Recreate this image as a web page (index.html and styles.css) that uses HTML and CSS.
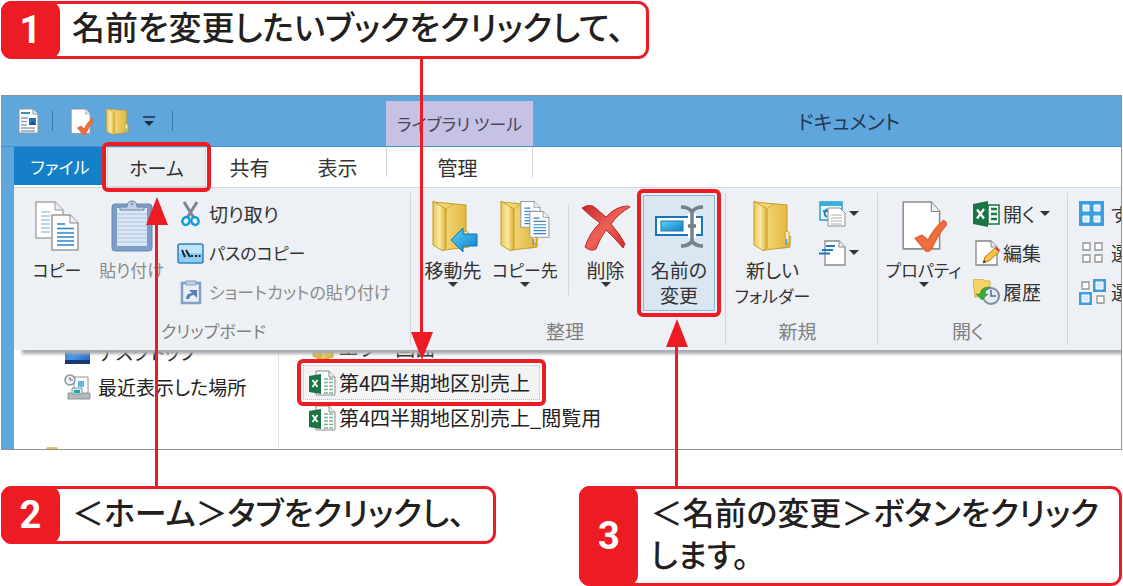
FILE: index.html
```html
<!DOCTYPE html>
<html lang="ja">
<head>
<meta charset="utf-8">
<meta name="viewport" content="width=device-width, initial-scale=1">
<title>ドキュメント</title>
<link rel="stylesheet" href="styles.css">
</head>
<body>
<svg class="defs" aria-hidden="true">
  <defs>
    <linearGradient id="gold" x1="0" x2="1"><stop offset="0" stop-color="#fbe694"/><stop offset="1" stop-color="#dfb53a"/></linearGradient>
    <linearGradient id="goldDark" x1="0" x2="1"><stop offset="0" stop-color="#e9c65a"/><stop offset=".5" stop-color="#f9e9a4"/><stop offset="1" stop-color="#dcae35"/></linearGradient>
    <linearGradient id="blue" x1="0" x2="1" y2="1"><stop offset="0" stop-color="#5fd0f7"/><stop offset="1" stop-color="#0b7fc9"/></linearGradient>
    <linearGradient id="red" x1="0" x2="1" y2="1"><stop offset="0" stop-color="#c9232a"/><stop offset=".5" stop-color="#ef6258"/><stop offset="1" stop-color="#c7222a"/></linearGradient>
    <linearGradient id="desk" x1="0" x2="1" y2="1"><stop offset="0" stop-color="#1d4fae"/><stop offset=".5" stop-color="#4f97e8"/><stop offset="1" stop-color="#1f5cbc"/></linearGradient>
    <symbol id="folder" viewBox="0 0 40 52">
      <path d="M28 50l9-3 2-11-6 2z" fill="#000" opacity=".12"/>
      <path d="M1 2L34 5V34l3 2v11l-25 3z" fill="url(#gold)" stroke="#c99a22"/>
      <path d="M1 1l13 8v39l-3 3L1 45z" fill="url(#goldDark)" stroke="#c99a22"/>
      <path d="M14 9l8-5" stroke="#d9ac37" fill="none"/>
      <path d="M32 31l4 1v10l-3 3z" fill="#fff3bf" stroke="#d5a62d"/>
      <path d="M33.500 39v6" stroke="#49a0df" stroke-width="1.500"/>
    </symbol>
    <symbol id="page" viewBox="0 0 29 38">
      <path d="M2 2h18l8 8v27H2z" fill="#fff" stroke="#9b9b9b" stroke-width="1.500"/>
      <path d="M20 2v8h8" fill="#f0f0f0" stroke="#8a8a8a"/>
      <path d="M7 11h8M7 15.500h17M7 20h17M7 24h17M7 28h17M7 32h17" stroke="#2b83cc" stroke-width="1.500"/>
    </symbol>
    <symbol id="check" viewBox="0 0 44 50">
      <path d="M2 2h27l8 9v36H2z" fill="#fff" stroke="#8d8d8d" stroke-width="1.500"/>
      <path d="M29 2v9h8" fill="#eee" stroke="#7f7f7f"/>
      <path d="M14 37l6-3 6 5Q32 27 41 20l3 3Q35 33 29 47l-4 3z" fill="#f0703d" stroke="#e4683a" stroke-width="2"/>
    </symbol>
    <symbol id="excel" viewBox="0 0 27 26">
      <path d="M15 4h11v19H15z" fill="#fff" stroke="#1a7443" stroke-width="1.500"/>
      <path d="M18 8h6M18 13h6M18 18h6" stroke="#1a7443" stroke-width="2.500"/>
      <path d="M0 3l15-3v26L0 23z" fill="#1a7443"/>
      <path d="M4 8.500l7 9M11 8l-7 9.500" stroke="#fff" stroke-width="2.200"/>
    </symbol>
    <symbol id="xlsx" viewBox="0 0 27 26">
      <path d="M7 1h13l6 6v18H7z" fill="#fff" stroke="#8b8b8b"/>
      <path d="M20 1v6h6" fill="#eee" stroke="#8b8b8b"/>
      <path d="M15 9h9M15 12.500h9M15 16h9M15 19.500h9M15 23h9" stroke="#74b58f" stroke-width="1.500" stroke-dasharray="4 1"/>
      <path d="M0 6l12-2v20L0 22z" fill="#1a7443"/>
      <path d="M3.500 10l5 7M8.500 10l-5 7" stroke="#fff" stroke-width="1.800"/>
    </symbol>
  </defs>
</svg>

<main class="guide">
  <section class="callout callout-first">
    <span class="callout-number">1</span>
    <p class="callout-text">名前を変更したいブックをクリックして、</p>
    <span class="arrow arrow-down"></span>
  </section>

  <section class="window">
    <header class="titlebar">
      <div class="quick">
        <svg class="quick-doc" viewBox="0 0 21 26" aria-hidden="true"><path d="M1 1h14l5 5v19H1z" fill="#fff" stroke="#8c97a5"/><path d="M15 1v5h5" fill="#e6edf4" stroke="#8c97a5"/><path d="M3 5h9" stroke="#3b9aa8" stroke-width="2"/><path d="M3 10h7M3 13.500h6M3 17h6M3 20h14M3 23h14" stroke="#8fa3bd" stroke-width="1.300"/><path d="M11 10h7v7h-7z" fill="#2478b8"/><path d="M11 17l4-4 3 4z" fill="#1c4f82"/></svg>
        <span class="quick-line"></span>
        <button class="quick-button quick-check" aria-label="プロパティ"><svg class="quick-wide" viewBox="0 0 44 50"><use href="#check"/></svg></button>
        <button class="quick-button" aria-label="新しいフォルダー"><svg class="quick-wide" viewBox="0 0 40 52" preserveAspectRatio="none"><use href="#folder"/></svg></button>
        <button class="quick-button quick-more" aria-label="カスタマイズ"><svg class="quick-menu" viewBox="0 0 14 11"><path d="M1 1h12" stroke="#1d2b3a" stroke-width="1.500"/><path d="M2 5h10l-5 5z" fill="#1d2b3a"/></svg></button>
        <span class="quick-line"></span>
      </div>
      <div class="context-label">ライブラリ ツール</div>
      <h1 class="title">ドキュメント</h1>
    </header>

    <nav class="tabs">
      <button class="tab tab-file">ファイル</button>
      <button class="tab tab-home marked">ホーム</button>
      <button class="tab">共有</button>
      <button class="tab">表示</button>
      <button class="tab tab-context">管理</button>
    </nav>

    <div class="ribbon">
      <section class="group group-clipboard">
        <div class="tools">
          <button class="big"><svg class="big-icon" viewBox="0 0 46 52"><path d="M2 2h19l8 8v28H2z" fill="#fff" stroke="#a8a8a8" stroke-width="1.500"/><path d="M21 2v8h8" fill="#eee" stroke="#999"/><path d="M7 12h9M7 16h9M7 20h9M7 24h9M7 28h9M7 32h9" stroke="#a5c9e6" stroke-width="1.500"/><use href="#page" x="16" y="13" width="29" height="38"/></svg><span class="small-kana">コピー</span></button>
          <button class="big big-paste" disabled><svg class="big-icon" viewBox="0 0 46 52"><rect x="3" y="4" width="40" height="47" rx="3" fill="#7d9cc6" stroke="#6988b4"/><path d="M8 8h30v38H8z" fill="#dbe7f4"/><path d="M8 14h30M8 18h30M8 22h30M8 26h30M8 30h30M8 34h30M8 38h30M8 42h30" stroke="#a9c2de"/><path d="M11 10V7h7q0-6 5-6t5 6h7v3z" fill="#c4d2e4" stroke="#6783a8"/><circle cx="23" cy="4" r="1.500" fill="#7d9cc6"/></svg><span class="small-kana">貼り付け</span></button>
          <div class="stack">
            <button class="small"><svg class="icon" viewBox="0 0 27 26"><path d="M7 1l10 16M20 1L10 17" stroke="#7b8793" stroke-width="3"/><ellipse cx="9" cy="20" rx="3.500" ry="4" fill="none" stroke="#139bd8" stroke-width="2.500" transform="rotate(25 9 20)"/><ellipse cx="18" cy="20" rx="3.500" ry="4" fill="none" stroke="#139bd8" stroke-width="2.500" transform="rotate(-25 18 20)"/></svg><span>切り取り</span></button>
            <button class="small"><svg class="icon" viewBox="0 0 27 26"><rect x="1" y="4" width="25" height="19" rx="2" fill="#8fcdf4" stroke="#3282c2" stroke-width="1.500"/><path d="M2 5h23v8H2z" fill="#bfe3fa"/><path d="M5 10l3 7M9 10l4 7" stroke="#17242f" stroke-width="2"/><path d="M14 16h2M18 16h2M21.500 16h2" stroke="#17242f" stroke-width="2"/></svg><span class="small-kana">パスのコピー</span></button>
            <button class="small" disabled><svg class="icon" viewBox="0 0 27 26"><path d="M5 4h18v20H5z" fill="#e7eef7" stroke="#829fc4" stroke-width="2.500"/><path d="M9 2h10v4H9z" fill="#c4d4e8" stroke="#829fc4"/><path d="M9 20q0-6 6-6l-3-3h8v8l-3-3q-4 0-5 4z" fill="#5f80ad"/></svg><span class="small-kana">ショートカットの貼り付け</span></button>
          </div>
        </div>
        <h2 class="group-name small-kana">クリップボード</h2>
      </section>

      <section class="group group-organize">
        <div class="tools">
          <button class="big"><svg class="big-icon big-icon-wide" viewBox="0 0 50 52"><use href="#folder" x="4" y="0" width="40" height="52"/><path d="M23 40l12-12v6h14v12H35v6z" fill="url(#blue)" stroke="#0b74b8"/></svg><span>移動先</span><i class="caret"></i></button>
          <button class="big"><svg class="big-icon big-icon-wide" viewBox="0 0 50 52"><use href="#folder" x="0" y="0" width="40" height="52"/><use href="#page" x="19" y="0" width="22" height="28"/><use href="#page" x="28" y="10" width="22" height="28"/></svg><span class="small-kana">コピー先</span><i class="caret"></i></button>
          <span class="rule"></span>
          <button class="big big-delete"><svg class="big-icon big-icon-wide" viewBox="0 0 50 52"><path d="M1 8q5-4 11-2 6 5 13 11Q35 6 47 6l2 1Q37 14 30 24q9 10 14 20l-2 4q-8-10-17-18-6 8-10 19-5 3-11-2Q9 32 19 23 9 16 1 8z" fill="url(#red)" stroke="#bd2a2c"/></svg><span>削除</span><i class="caret"></i></button>
          <button class="big big-rename marked"><svg class="big-icon big-icon-wide" viewBox="0 0 50 52"><rect x="2" y="17" width="46" height="18" fill="#fff" stroke="#1c74b9" stroke-width="2"/><rect x="7" y="21" width="22" height="10" fill="url(#blue)" stroke="#1679b8"/><path d="M34 14h8v24h-8z" fill="#fff"/><path d="M27 7q8 0 11 5 3-5 11-5M27 46q8 0 11-5 3 5 11 5M38 11v31M34 26h8" fill="none" stroke="#77818a" stroke-width="3.500"/></svg><span>名前の<br>変更</span></button>
        </div>
        <h2 class="group-name">整理</h2>
      </section>

      <section class="group group-new">
        <div class="tools">
          <button class="big big-folder"><svg class="big-icon" viewBox="0 0 40 52"><use href="#folder"/></svg><span>新しい<br><span class="small-kana">フォルダー</span></span></button>
          <div class="stack">
            <button class="small" aria-label="新しいアイテム"><svg class="icon" viewBox="0 0 27 26"><path d="M1 1h22v18H1z" fill="#eef9fd" stroke="#2b9cc9" stroke-width="1.500"/><path d="M1 1h22v4H1z" fill="#37b1dc"/><path d="M8 8q-5 5 0 8M4 10h6" stroke="#2782b5" stroke-width="2" fill="none"/><path d="M9 7h12l5 5v13H9z" fill="#fff" stroke="#8a8a8a"/><path d="M12 14h11M12 17h11M12 20h11M12 23h11" stroke="#aaa"/></svg><i class="caret"></i></button>
            <button class="small" aria-label="ショートカット"><svg class="icon" viewBox="0 0 27 26"><path d="M6 1h14l6 6v18H6z" fill="#fff" stroke="#8a8a8a" stroke-width="1.300"/><path d="M20 1v6h6" fill="#eee" stroke="#8a8a8a"/><path d="M7 6h9M3 10h11M0 13.500h11" stroke="#2477bd" stroke-width="1.800"/></svg><i class="caret"></i></button>
          </div>
        </div>
        <h2 class="group-name">新規</h2>
      </section>

      <section class="group group-open">
        <div class="tools">
          <button class="big big-property"><svg class="big-icon" viewBox="0 0 44 50"><use href="#check"/></svg><span class="small-kana">プロパティ</span><i class="caret"></i></button>
          <div class="stack">
            <button class="small"><svg class="icon" viewBox="0 0 27 26"><use href="#excel"/></svg><span>開く</span><i class="caret"></i></button>
            <button class="small"><svg class="icon" viewBox="0 0 27 26"><path d="M3 1h15l6 6v18H3z" fill="#fff" stroke="#858585" stroke-width="1.300"/><path d="M18 1v6h6" fill="#eee" stroke="#858585"/><path d="M10 23l2-6L22 8l4 4-10 9z" fill="#f5c243" stroke="#a97b22"/><path d="M22 8l2-1 3 3-1 2z" fill="#dc3c4b"/><path d="M10 23l1-3 2 2z" fill="#333"/></svg><span>編集</span></button>
            <button class="small"><svg class="icon" viewBox="0 0 27 26"><path d="M0 0h10l2 2h5v15l-15 1z" fill="#f7d468" stroke="#d5a93a"/><circle cx="18" cy="17" r="8" fill="#e4ecf2" stroke="#7a8e9e" stroke-width="2"/><path d="M18 11v6h5" fill="none" stroke="#4a6d8c" stroke-width="1.500"/><path d="M3 15l6 6 6-6h-3q0-5 5-7Q8 7 7 15z" fill="#3cab3a" stroke="#2c8a2e" stroke-width=".5"/></svg><span>履歴</span></button>
          </div>
        </div>
        <h2 class="group-name">開く</h2>
      </section>

      <section class="group group-select">
        <div class="stack">
          <button class="small"><svg class="icon" viewBox="0 0 27 26"><path d="M0 0h25v25H0z" fill="#3f9ddf"/><path d="M4 4h6v6H4zM15 4h6v6h-6zM4 15h6v6H4zM15 15h6v6h-6z" fill="#d5ebfb" stroke="#fff"/></svg><span>す</span></button>
          <button class="small"><svg class="icon" viewBox="0 0 27 26"><path d="M4 3h7v7H4zM16 3h7v7h-7zM4 15h7v7H4zM16 15h7v7h-7z" fill="#fff" stroke="#929292" stroke-width="1.300"/></svg><span>選</span></button>
          <button class="small"><svg class="icon" viewBox="0 0 27 26"><path d="M14 0h13v13H14zM0 13h13v13H0z" fill="#3f9ddf"/><path d="M17 3h7v7h-7zM3 16h7v7H3z" fill="#d5ebfb" stroke="#fff"/><path d="M3 3h7v7H3zM18 17h7v7h-7z" fill="#fff" stroke="#929292" stroke-width="1.300"/></svg><span>選</span></button>
        </div>
      </section>
    </div>

    <div class="content">
      <ul class="places">
        <li class="place"><svg class="icon" viewBox="0 0 27 26"><path d="M1 1h25v24H1z" fill="url(#desk)"/><path d="M1 21h25v4H1z" fill="#173a72"/></svg><a href="#desktop">デスクトップ</a></li>
        <li class="place"><svg class="icon" viewBox="0 0 27 26"><path d="M10 3h14v18H10z" fill="#fff" stroke="#929292"/><path d="M14 7h6v6h-6z" fill="#5bb9df"/><path d="M4 19h22v6H4z" fill="#b4b9bd" stroke="#909497"/><path d="M8 14h10v6H8z" fill="#d3f4f6" stroke="#8b9499"/><path d="M10 16h6v3h-6z" fill="#21a5a8"/><circle cx="6" cy="6" r="5" fill="#eff3f6" stroke="#8a949d" stroke-width="1.500"/><path d="M6 3v3h3" stroke="#5c6973" fill="none"/></svg><a href="#recent">最近表示した場所</a></li>
        <li class="library"><svg class="library-icon" viewBox="0 0 27 26"><path d="M1 1h14v3h11v20H1z" fill="#e6c75e" stroke="#cda83a"/></svg></li>
      </ul>
      <ul class="files">
        <li class="file"><svg class="icon" viewBox="0 0 27 26"><path d="M4 1l20 2v19l-12 3-8-4z" fill="url(#gold)" stroke="#c99a22"/><path d="M4 1l9 5v19l-9-4z" fill="#e0b944"/></svg><a href="#errors">エラー画面</a></li>
        <li class="file file-selected marked"><svg class="icon" viewBox="0 0 27 26"><use href="#xlsx"/></svg><a href="#q4">第4四半期地区別売上</a></li>
        <li class="file"><svg class="icon" viewBox="0 0 27 26"><use href="#xlsx"/></svg><a href="#q4view">第4四半期地区別売上_閲覧用</a></li>
      </ul>
    </div>
  </section>

  <div class="bottom">
    <section class="callout callout-home">
      <span class="callout-number">2</span>
      <p class="callout-text">＜ホーム＞タブをクリックし、</p>
      <span class="arrow arrow-home"></span>
    </section>
    <section class="callout callout-last">
      <span class="callout-number">3</span>
      <p class="callout-text">＜名前の変更＞ボタンをクリック<br>します。</p>
      <span class="arrow arrow-rename"></span>
    </section>
  </div>
</main>
</body>
</html>
```
FILE: styles.css
```css
* { box-sizing: border-box; }

body {
  margin: 0;
  background: #fff;
  color: #222;
  font-family: "Noto Sans CJK JP", sans-serif;
  font-feature-settings: "palt";
  font-size: 19px;
  line-height: 25px;
}

button {
  margin: 0;
  padding: 0;
  border: 0;
  background: none;
  color: #333;
  font: inherit;
  font-feature-settings: inherit;
  white-space: nowrap;
}
button:disabled { color: #8b8b8b; }
h1, h2, p, ul { margin: 0; padding: 0; font-weight: 400; list-style: none; }
a { color: inherit; text-decoration: none; }
svg { display: block; flex: none; }

.defs { position: absolute; width: 0; height: 0; }
.small-kana { font-size: 17px; }
.guide { padding: 1px; }

/* Numbered callouts */
.callout {
  position: relative;
  display: flex;
  width: fit-content;
  min-height: 58px;
  border: 3px solid #ed1c24;
  border-radius: 11px;
  background: #fff;
}
.callout-first { padding-right: 22px; }
.callout-number {
  display: grid;
  place-items: center;
  flex: none;
  width: 59px;
  margin: -3px 0 -3px -3px;
  border-radius: 11px;
  background: #ed1c24;
  color: #fff;
  font: 700 38px/40px Roboto, sans-serif;
}
.callout-text {
  padding: 1px 0 9px 12px;
  color: #231f20;
  font-size: 33px;
  font-weight: 500;
  line-height: 42px;
  white-space: nowrap;
}
.bottom .callout-text { font-size: 32px; }
.callout-home { padding-right: 28px; }
.callout-last { margin-left: auto; padding-right: 20px; }

.arrow {
  position: absolute;
  z-index: 5;
  width: 3px;
  background: #ed1c24;
}
.arrow::after {
  content: "";
  position: absolute;
  left: -9px;
  border: solid transparent;
  border-width: 0 11px;
}
.arrow-down { top: 100%; left: 416px; height: 282px; }
.arrow-down::after { bottom: -22px; border-top: 28px solid #ed1c24; }
.arrow-home { bottom: 100%; left: 151px; height: 265px; }
.arrow-rename { bottom: 100%; left: 93px; height: 143px; }
.arrow-home::after, .arrow-rename::after { top: -27px; border-bottom: 28px solid #ed1c24; }

.marked { position: relative; }
.marked::after {
  content: "";
  position: absolute;
  z-index: 4;
  inset: -6px;
  border: 4px solid #ed1c24;
  border-radius: 6px;
}

/* Explorer window */
.window {
  margin-top: 36px;
  border: 1px solid #929292;
  border-left: 0;
  background: linear-gradient(90deg, #5fa6dd 13px, #fff 13px);
}
.titlebar {
  display: flex;
  align-items: center;
  height: 51px;
  border-bottom: 1px solid #3f91d2;
  background: #5fa6dd;
}
.quick { display: flex; align-items: center; width: 385px; padding-left: 17px; }
.quick-doc { width: 21px; height: 26px; margin-right: 13px; }
.quick-line { width: 1px; height: 20px; background: #3a76a8; }
.quick-check { margin: 0 12px 0 17px; }
.quick-wide { width: 24px; height: 27px; }
.quick-more { margin: 0 16px 0 12px; }
.quick-menu { width: 14px; height: 11px; }
.context-label {
  align-self: flex-end;
  width: 147px;
  height: 45px;
  background: #c6c2e3;
  color: #47445c;
  font-size: 17px;
  line-height: 46px;
  text-align: center;
}
.title {
  flex: 1;
  padding-left: 44px;
  color: #26394d;
  font-size: 20px;
  text-align: center;
}

.tabs {
  display: grid;
  grid-template-columns: 92px 100px 87px 93px 147px;
  height: 40px;
  margin-left: 13px;
  background: #fff;
}
.tab { font-size: 20px; }
.tab-file { height: 38px; background: #1580c8; color: #fff; font-size: 17px; }
.tab-home { margin-left: 1px; border: 1px solid #d3d6d9; background: #eceff2; font-size: 19px; }
.tab-context { height: 30px; padding: 8px 4px 0 0; border: solid #d5d5d5; border-width: 0 1px; }
.tab:nth-child(4) { padding-right: 4px; }

/* Ribbon */
.ribbon {
  position: relative;
  z-index: 2;
  display: flex;
  height: 163px;
  margin-left: 13px;
  border-top: 1px solid #d4d7da;
  background: #edf0f4;
  box-shadow: 8px 4px 3px #a9acb0;
  clip-path: inset(-10px 0 -8px 0);
}
.group {
  position: relative;
  flex: none;
  display: flex;
  flex-direction: column;
  justify-content: space-between;
  padding: 7px 0 7px 7px;
}
.group + .group::before {
  content: "";
  position: absolute;
  top: 5px;
  bottom: 5px;
  left: 0;
  width: 1px;
  background: #d2d6da;
}
.group-clipboard { width: 396px; }
.group-organize { width: 315px; }
.group-new { width: 152px; padding-left: 5px; }
.group-open { width: 190px; padding-left: 4px; }
.group-select { flex: 1; min-width: 0; overflow: hidden; padding-left: 12px; }
.group-name { padding-right: 12px; color: #808080; font-size: 19px; text-align: center; }
.group-name.small-kana { padding-right: 4px; font-size: 17px; }
.tools { display: flex; }

.big {
  display: flex;
  flex-direction: column;
  align-items: center;
  width: 72px;
  height: 116px;
  padding-top: 5px;
}
.big-icon { width: 46px; height: 52px; margin-bottom: 5px; }
.big-icon-wide { width: 50px; }
.big-paste { width: 77px; }
.big-delete { width: 69px; }
.big-rename { margin-left: 3px; padding-top: 4px; border: 1px solid #7fbbe8; background: #dae6f2; }
.big-rename::after { inset: -7px; }
.big-folder, .big-property { width: 85px; }
.rule { width: 1px; height: 90px; margin: 10px 2px 0 7px; background: #d2d6da; }

.caret { border: 5px solid transparent; border-top-color: #333; border-bottom: 0; }
.small .caret { margin-left: 2px; }

.stack { display: flex; flex-direction: column; margin: -1px 0 0 7px; }
.small { display: flex; align-items: center; gap: 5px; height: 39px; }
.group-new .stack { margin-left: 4px; }
.group-new .small { gap: 1px; }
.group-open .small { gap: 3px; }
.group-select .stack { margin-left: 0; }
.icon { width: 27px; height: 26px; }

/* Folder contents */
.content {
  display: grid;
  grid-template-columns: 265px 1fr;
  height: 119px;
  margin: -20px 0 0 13px;
  overflow: hidden;
  color: #222;
}
.places { padding-top: 4px; border-right: 1px solid #e9e9e9; }
.place { display: flex; align-items: center; gap: 7px; height: 35px; padding-left: 50px; }
.library { padding: 43px 0 0 32px; }
.library-icon { width: 20px; height: 19px; }
.files { padding-left: 24px; font-size: 20px; }
.file { display: flex; align-items: center; gap: 3px; width: fit-content; height: 35px; padding: 0 10px 0 6px; white-space: nowrap; }
.file-selected { background: #f3f3f3; outline: 1px dotted #bdbdbd; outline-offset: -1px; }

.bottom { display: flex; align-items: flex-start; margin-top: 36px; }
```
